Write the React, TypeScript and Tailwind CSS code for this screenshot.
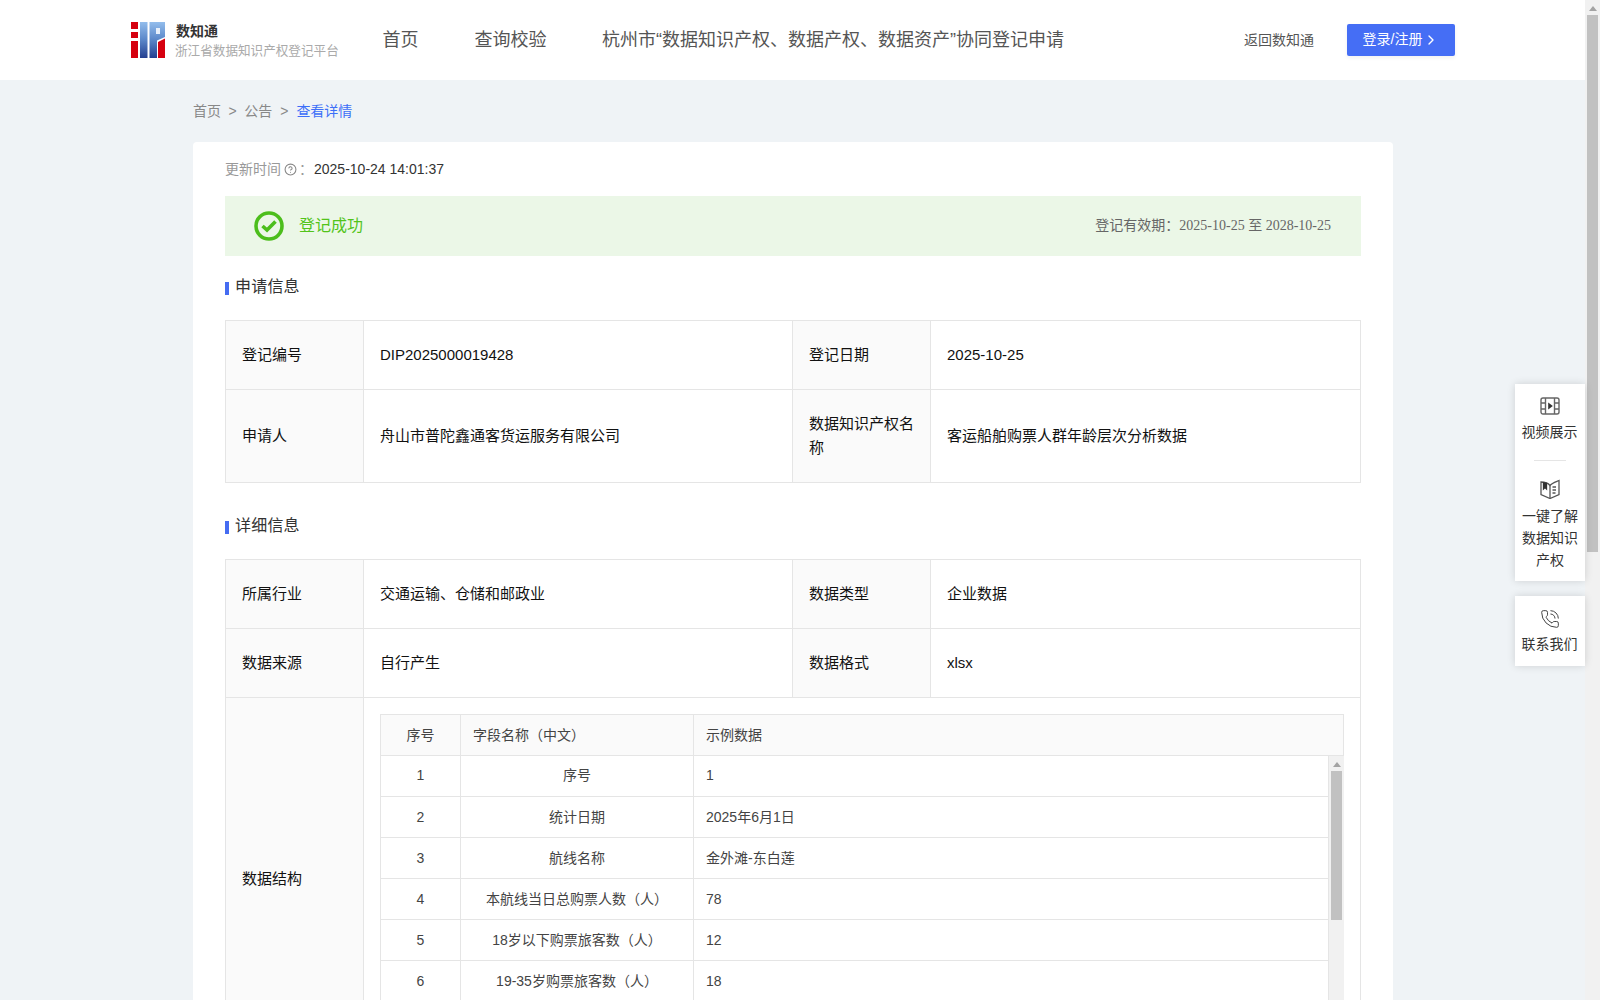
import { CircleHelp, ChevronRight, PhoneCall } from "lucide-react";

const font = "font-['Liberation_Sans','Noto_Sans_CJK_SC',sans-serif]";

function Logo() {
  return (
    <svg width="34" height="36" viewBox="0 0 34 36" className="shrink-0">
      <defs>
        <linearGradient id="lg" x1="0" y1="0" x2="0" y2="1">
          <stop offset="0" stopColor="#93bdec" />
          <stop offset="0.5" stopColor="#5a86c8" />
          <stop offset="1" stopColor="#233f90" />
        </linearGradient>
      </defs>
      <rect x="0" y="0" width="7" height="7" fill="#d6000f" />
      <rect x="0" y="10" width="7" height="6" fill="#d6000f" />
      <rect x="0" y="19" width="7" height="17" fill="#d6000f" />
      <rect x="9" y="0" width="7.5" height="36" fill="url(#lg)" />
      <path d="M18.5 0H34V15L26 18.5V36H18.5Z" fill="url(#lg)" />
      <rect x="25" y="6" width="4" height="6" fill="#e8f0fb" />
      <path d="M27 20L34 16.5V36H27Z" fill="#d6000f" />
    </svg>
  );
}

function SectionTitle({ children, className }: { children: string; className: string }) {
  return (
    <div className={`flex items-center ${className}`}>
      <span className="w-[4px] h-[13px] bg-[#456cf2] mt-[2px]" />
      <span className="ml-[6px] text-[16px] tracking-[0.2px] leading-[20px] text-[#333]">{children}</span>
    </div>
  );
}

const th = "border border-[#e5e5e5] bg-[#fafafa] text-[15px] text-[#111] font-normal text-left pl-[16px] pr-[16px] leading-[24px]";
const td = "border border-[#e5e5e5] text-[15px] text-[#111] pl-[16px] pr-[16px] leading-[24px]";

const rows = [
  ["1", "序号", "1"],
  ["2", "统计日期", "2025年6月1日"],
  ["3", "航线名称", "金外滩-东白莲"],
  ["4", "本航线当日总购票人数（人）", "78"],
  ["5", "18岁以下购票旅客数（人）", "12"],
  ["6", "19-35岁购票旅客数（人）", "18"],
];

function InnerTable() {
  return (
    <div className="w-[964px]">
      <table className="w-[964px] table-fixed border-collapse text-[14px] text-[#444]">
        <colgroup>
          <col className="w-[80px]" />
          <col className="w-[233px]" />
          <col />
        </colgroup>
        <thead>
          <tr className="h-[41px] bg-[#fafafa]">
            <th className="border border-[#e5e5e5] font-normal text-center">序号</th>
            <th className="border border-[#e5e5e5] font-normal text-left pl-[12px]">字段名称（中文）</th>
            <th className="border border-[#e5e5e5] font-normal text-left pl-[12px]">示例数据</th>
          </tr>
        </thead>
      </table>
      <div className="flex h-[287px] overflow-hidden">
        <table className="w-[949px] h-fit -mt-px table-fixed border-collapse text-[14px] text-[#444]">
          <colgroup>
            <col className="w-[80px]" />
            <col className="w-[233px]" />
            <col />
          </colgroup>
          <tbody>
            {rows.map((r) => (
              <tr key={r[0]} className="h-[41px]">
                <td className="border border-[#e5e5e5] border-t-0 pt-px text-center">{r[0]}</td>
                <td className="border border-[#e5e5e5] border-t-0 pt-px text-center">{r[1]}</td>
                <td className="border border-[#e5e5e5] border-t-0 pt-px pl-[12px]">{r[2]}</td>
              </tr>
            ))}
          </tbody>
        </table>
        <div className="w-[15px] bg-[#f1f1f1] flex flex-col items-center pt-[6px]">
          <span className="w-0 h-0 border-x-[4px] border-x-transparent border-b-[5px] border-b-[#a3a3a3]" />
          <span className="w-[11px] h-[149px] bg-[#c1c1c1] mt-[4px]" />
        </div>
      </div>
    </div>
  );
}

function FilmPlay() {
  return (
    <svg width="20" height="20" viewBox="0 0 20 20" fill="none" stroke="#666" strokeWidth="1.4">
      <rect x="1" y="2" width="18" height="16" rx="2" />
      <path d="M5.5 2V18M14.5 2V18M1 7H5.5M1 13H5.5M14.5 7H19M14.5 13H19" />
      <path d="M8.2 6.5L12.8 10L8.2 13.5Z" fill="#333" stroke="none" />
    </svg>
  );
}

function BookIcon() {
  return (
    <svg width="20" height="20" viewBox="0 0 20 20" fill="none" stroke="#555" strokeWidth="1.3">
      <path d="M1 3C4.5 3 8 4 10 6.5C12 4 15.5 3 19 1.5V15.5L10 19.5L1 15.5Z" />
      <path d="M10 6.5V19" />
      <path d="M3.5 3.2V10L5 8.5L6.5 10V3.8" fill="#333" stroke="#333" />
      <path d="M12.5 8H16M12.5 11H16M12.5 14H15.5" />
    </svg>
  );
}

function Floating() {
  return (
    <div className="absolute right-[15px] top-[384px] w-[70px] flex flex-col gap-[15px] text-[14px] text-[#333] text-center">
      <div className="bg-white shadow-[0_0_8px_rgba(0,0,0,0.14)] h-[197px] pt-[12px] flex flex-col items-center">
        <FilmPlay />
        <div className="leading-[22px] mt-[5px] -ml-px">视频展示</div>
        <div className="w-[32px] h-px bg-[#e5e5e5] mt-[17px]" />
        <div className="mt-[18px]"><BookIcon /></div>
        <div className="leading-[22px] mt-[6px] px-[6px]">一键了解数据知识产权</div>
      </div>
      <div className="bg-white shadow-[0_0_8px_rgba(0,0,0,0.14)] h-[70px] pt-[13px] flex flex-col items-center">
        <PhoneCall size={20} strokeWidth={1.2} color="#444" />
        <div className="leading-[22px] mt-[4px] -ml-px">联系我们</div>
      </div>
    </div>
  );
}

export default function App() {
  return (
    <div className={`relative flex h-[1000px] overflow-hidden bg-[#eff3f6] ${font}`}>
      <div className="w-[1585px] shrink-0">
        <header className="h-[80px] bg-white flex items-center pl-[131px] pr-[130px]">
          <Logo />
          <div className="ml-[10px] w-[207px]">
            <div className="text-[14px] font-bold leading-[18px] pt-px ml-px text-[#333]">数知通</div>
            <div className="text-[12.6px] leading-[18px] mt-[2px] text-[#aaa]">浙江省数据知识产权登记平台</div>
          </div>
          <nav className="flex text-[18px] text-[#555] ml-[0.5px]">
            <a>首页</a>
            <a className="ml-[56px]">查询校验</a>
            <a className="ml-[55.5px]">杭州市“数据知识产权、数据产权、数据资产”协同登记申请</a>
          </nav>
          <div className="ml-auto flex items-center">
            <a className="text-[14px] text-[#555]">返回数知通</a>
            <button className="ml-[33px] w-[108px] h-[32px] rounded-[2px] bg-[#456ef5] text-white text-[14px] flex items-center justify-center shadow-[0_2px_4px_rgba(0,0,0,0.06)]">
              <span className="-mt-px">登录/注册</span>
              <ChevronRight size={16} className="ml-[1px]" />
            </button>
          </div>
        </header>

        <div className="w-[1200px] ml-[193px]">
          <div className="h-[62px] flex items-center text-[14px] text-[#888]">
            <span>首页</span>
            <span className="mx-[7.5px]">&gt;</span>
            <span>公告</span>
            <span className="ml-[8px] mr-[8px]">&gt;</span>
            <span className="text-[#3d6ff8]">查看详情</span>
          </div>

          <div className="bg-white rounded-t-[4px] px-[32px] pt-[16px] h-[900px]">
            <div className="flex items-center h-[22px] text-[14px]">
              <span className="text-[#999]">更新时间</span>
              <CircleHelp size={13} color="#888" className="ml-[3px]" />
              <span className="text-[#999] ml-[2px]">：</span>
              <span className="text-[#333] ml-[1px]">2025-10-24 14:01:37</span>
            </div>

            <div className="mt-[16px] h-[60px] bg-[#ebf7e7] flex items-center pl-[29px] pr-[30px]">
              <svg width="30" height="30" viewBox="0 0 30 30" fill="none">
                <circle cx="15" cy="15" r="13" stroke="#4cbe1c" strokeWidth="3.6" />
                <path d="M8.5 15L13 19L21.5 10.5" stroke="#4cbe1c" strokeWidth="3.6" />
              </svg>
              <span className="ml-[15px] text-[16px] text-[#52c41a] -mt-px">登记成功</span>
              <span className="ml-auto text-[14px] text-[#666] -mt-[2px] font-['Liberation_Serif','Noto_Sans_CJK_SC',serif]">
                登记有效期：2025-10-25 至 2028-10-25
              </span>
            </div>

            <SectionTitle className="mt-[21px]">申请信息</SectionTitle>

            <table className="mt-[23px] w-[1136px] table-fixed border-collapse">
              <colgroup>
                <col className="w-[138px]" />
                <col className="w-[429px]" />
                <col className="w-[138px]" />
                <col />
              </colgroup>
              <tbody>
                <tr className="h-[69px]">
                  <th className={th}>登记编号</th>
                  <td className={td}>DIP2025000019428</td>
                  <th className={th}>登记日期</th>
                  <td className={td}>2025-10-25</td>
                </tr>
                <tr className="h-[93px]">
                  <th className={th}>申请人</th>
                  <td className={td}>舟山市普陀鑫通客货运服务有限公司</td>
                  <th className={th}>数据知识产权名称</th>
                  <td className={td}>客运船舶购票人群年龄层次分析数据</td>
                </tr>
              </tbody>
            </table>

            <SectionTitle className="mt-[33px]">详细信息</SectionTitle>

            <table className="mt-[23px] w-[1136px] table-fixed border-collapse">
              <colgroup>
                <col className="w-[138px]" />
                <col className="w-[429px]" />
                <col className="w-[138px]" />
                <col />
              </colgroup>
              <tbody>
                <tr className="h-[69px]">
                  <th className={th}>所属行业</th>
                  <td className={td}>交通运输、仓储和邮政业</td>
                  <th className={th}>数据类型</th>
                  <td className={td}>企业数据</td>
                </tr>
                <tr className="h-[69px]">
                  <th className={th}>数据来源</th>
                  <td className={td}>自行产生</td>
                  <th className={th}>数据格式</th>
                  <td className={td}>xlsx</td>
                </tr>
                <tr>
                  <th className={th}>数据结构</th>
                  <td colSpan={3} className="border border-[#e5e5e5] p-[16px]">
                    <InnerTable />
                  </td>
                </tr>
              </tbody>
            </table>
          </div>
        </div>
      </div>

      <div className="w-[15px] shrink-0 bg-[#f1f1f1] flex flex-col items-center pt-[6px]">
        <span className="w-0 h-0 border-x-[4px] border-x-transparent border-b-[5px] border-b-[#a3a3a3]" />
        <span className="w-[11px] h-[537px] bg-[#c1c1c1] mt-[4px]" />
      </div>

      <Floating />
    </div>
  );
}
